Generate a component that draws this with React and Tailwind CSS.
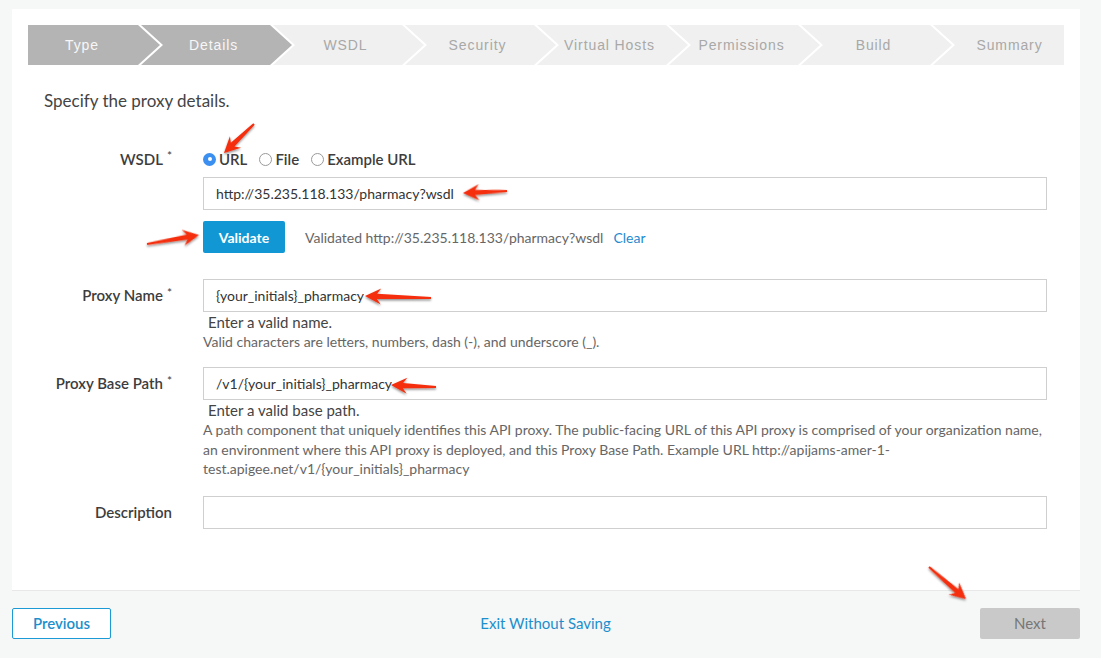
import React from "react";

const steps = ["Type", "Details", "WSDL", "Security", "Virtual Hosts", "Permissions", "Build", "Summary"];

const arrows = [
  [254, 124, 224, 153],
  [507, 191, 463, 193],
  [147, 244, 199, 235],
  [431, 298, 365, 296],
  [436, 387, 391, 385],
  [929, 567, 966, 599],
];

function Arrow({ x1, y1, x2, y2 }) {
  const L = Math.hypot(x2 - x1, y2 - y1);
  const a = (Math.atan2(y2 - y1, x2 - x1) * 180) / Math.PI;
  return (
    <g transform={`translate(${x1} ${y1}) rotate(${a})`}>
      <polygon
        points={`0,-1 ${L - 12},-2.6 ${L - 16},-8 ${L},0 ${L - 16},8 ${L - 12},2.6 0,1`}
        fill="#f52d0c"
      />
    </g>
  );
}

function Stepper() {
  return (
    <div className="flex h-10 bg-white [font-family:'Liberation_Sans',Arial,sans-serif] text-[14px] tracking-[0.9px]">
      {steps.map((s, i) => {
        const done = i < 2;
        let shape =
          "w-[151px] shrink-0 -ml-[19px] pl-[18px] pr-[24px] [clip-path:polygon(0_0,calc(100%_-_22px)_0,100%_50%,calc(100%_-_22px)_100%,0_100%,22px_50%)]";
        if (i === 0)
          shape =
            "w-[132px] shrink-0 pr-[24px] [clip-path:polygon(0_0,calc(100%_-_22px)_0,100%_50%,calc(100%_-_22px)_100%,0_100%)]";
        if (i === steps.length - 1)
          shape = "flex-1 -ml-[19px] pl-[22px] [clip-path:polygon(0_0,100%_0,100%_100%,0_100%,22px_50%)]";
        return (
          <div
            key={s}
            className={
              shape +
              " flex items-center justify-center " +
              (done ? "bg-[#b4b4b4] text-[#f7f7f7]" : "bg-[#f0f0f0] text-[#a8a8a8]")
            }
          >
            {s}
          </div>
        );
      })}
    </div>
  );
}

function Row({ label, required, className, children }) {
  return (
    <div className={"flex " + (className || "")}>
      <div className="w-[144px] shrink-0 h-[33px] flex items-center justify-end text-[15px] font-semibold text-[#3d3d3d]">
        {label}
        {required && <span className="ml-[4px] -mt-[6px] text-[12px] font-normal">*</span>}
      </div>
      <div className="ml-[31px] mr-[17px] flex-1">{children}</div>
    </div>
  );
}

function Input({ value }) {
  return (
    <div className="h-[33px] border border-[#cfcfcf] bg-white flex items-center px-3 text-[14px] text-[#333]">
      {value}
    </div>
  );
}

function Radio({ checked, label }) {
  return (
    <div className="flex items-center gap-[3px]">
      {checked ? (
        <span className="w-[13px] h-[13px] rounded-full bg-[#3b8ff0] flex items-center justify-center">
          <span className="w-[4px] h-[4px] rounded-full bg-white" />
        </span>
      ) : (
        <span className="w-[13px] h-[13px] rounded-full border border-[#9a9a9a] bg-white" />
      )}
      <span className="text-[15px] font-semibold text-[#3d3d3d]">{label}</span>
    </div>
  );
}

export default function App() {
  return (
    <div className="relative min-h-[658px] bg-[#f6f7f7] [font-family:Lato,'Open_Sans',sans-serif]">
      <div className="ml-3 mr-[21px] pt-[9px]">
        <div className="bg-white px-4 pt-4 pb-[61px] border-b border-[#e8e8e8]">
          <Stepper />
          <p className="mt-[26px] ml-4 text-[17px] leading-5 text-[#444]">Specify the proxy details.</p>

          <div className="mt-[38px] flex">
            <div className="w-[144px] shrink-0 h-5 flex items-center justify-end text-[15px] font-semibold text-[#3d3d3d]">
              WSDL<span className="ml-[4px] -mt-[6px] text-[12px] font-normal">*</span>
            </div>
            <div className="ml-[31px] flex items-center gap-[12px] h-5">
              <Radio checked label="URL" />
              <Radio label="File" />
              <Radio label="Example URL" />
            </div>
          </div>

          <div className="ml-[175px] mr-[17px] mt-2">
            <Input value="http://35.235.118.133/pharmacy?wsdl" />
            <div className="mt-[11px] flex items-center">
              <button className="h-8 w-[82px] rounded-[2px] bg-[#1198d4] text-white text-[14px] font-bold">
                Validate
              </button>
              <span className="ml-5 text-[14px] text-[#666]">Validated http://35.235.118.133/pharmacy?wsdl</span>
              <span className="ml-[10px] text-[14px] text-[#1f8ad0]">Clear</span>
            </div>
          </div>

          <Row label="Proxy Name" required className="mt-[26px]">
            <Input value="{your_initials}_pharmacy" />
            <p className="ml-[5px] text-[15px] leading-5 text-[#444]">Enter a valid name.</p>
            <p className="text-[14px] leading-[19px] text-[#666]">
              Valid characters are letters, numbers, dash (-), and underscore (_).
            </p>
          </Row>

          <Row label="Proxy Base Path" required className="mt-[16px]">
            <Input value="/v1/{your_initials}_pharmacy" />
            <p className="ml-[5px] text-[15px] leading-5 text-[#444]">Enter a valid base path.</p>
            <p className="text-[14px] leading-[19.5px] text-[#666]">
              A path component that uniquely identifies this API proxy. The public-facing URL of this API proxy is
              comprised of your organization name,
              <br />
              an environment where this API proxy is deployed, and this Proxy Base Path. Example URL
              http://apijams-amer-1-
              <br />
              test.apigee.net/v1/{"{your_initials}"}_pharmacy
            </p>
          </Row>

          <Row label="Description" className="mt-[17px]">
            <Input value="" />
          </Row>
        </div>

        <div className="mt-[17px] flex items-center justify-between">
          <button className="h-[31px] w-[99px] rounded-[2px] border border-[#1c9ad6] bg-white text-[15px] font-semibold text-[#1c8fcc]">
            Previous
          </button>
          <span className="text-[15px] text-[#1c8fcc]">Exit Without Saving</span>
          <button className="h-[31px] w-[100px] rounded-[2px] bg-[#c9c9c9] text-[15px] text-[#777]">Next</button>
        </div>
      </div>

      <svg className="absolute left-0 top-0 pointer-events-none" width="1101" height="658">
        <defs>
          <filter id="sh" x="-20%" y="-20%" width="140%" height="140%">
            <feDropShadow dx="0" dy="1.5" stdDeviation="1.2" floodColor="#000" floodOpacity="0.45" />
          </filter>
        </defs>
        <g filter="url(#sh)">
          {arrows.map(([x1, y1, x2, y2], i) => (
            <Arrow key={i} x1={x1} y1={y1} x2={x2} y2={y2} />
          ))}
        </g>
      </svg>
    </div>
  );
}
